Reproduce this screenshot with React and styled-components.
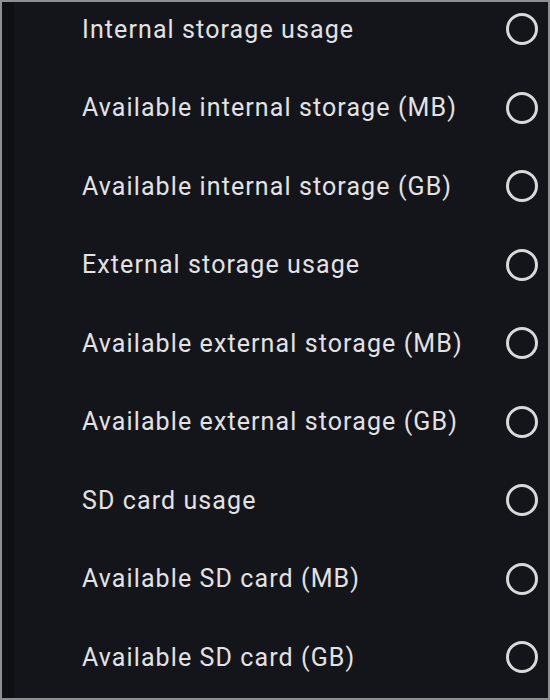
import styled, { createGlobalStyle } from "styled-components";

const GlobalStyle = createGlobalStyle`
    html, body {
        margin: 0;
        padding: 0;
        background: #14151a;
    }
`;

const Frame = styled.div`
    width: 550px;
    height: 700px;
    box-sizing: border-box;
    border: 2px solid #8e8f92;
    background: #14151a;
    overflow: hidden;
    display: flex;
`;

const Edge = styled.div`
    width: 12px;
    flex: none;
    background: #0f1013;
`;

const List = styled.ul`
    list-style: none;
    margin: -12px 0 0;
    padding: 0;
    flex: 1;
`;

const Row = styled.li`
    height: 78.5px;
    display: flex;
    align-items: center;
    justify-content: space-between;
    padding: 0 10px 0 68px;
`;

const Label = styled.span`
    font-family: Roboto, "Noto Sans", sans-serif;
    font-size: 25px;
    font-weight: 400;
    letter-spacing: 1.1px;
    color: #e2e2e4;
`;

const Radio = styled.span`
    width: 32px;
    height: 32px;
    box-sizing: border-box;
    border: 3px solid #d9d9db;
    border-radius: 50%;
    flex: none;
`;

const options = [
    "Internal storage usage",
    "Available internal storage (MB)",
    "Available internal storage (GB)",
    "External storage usage",
    "Available external storage (MB)",
    "Available external storage (GB)",
    "SD card usage",
    "Available SD card (MB)",
    "Available SD card (GB)",
];

export default function App() {
    return (
        <>
            <GlobalStyle />
            <Frame>
                <Edge />
                <List>
                    {options.map((o) => (
                        <Row key={o}>
                            <Label>{o}</Label>
                            <Radio />
                        </Row>
                    ))}
                </List>
            </Frame>
        </>
    );
}
